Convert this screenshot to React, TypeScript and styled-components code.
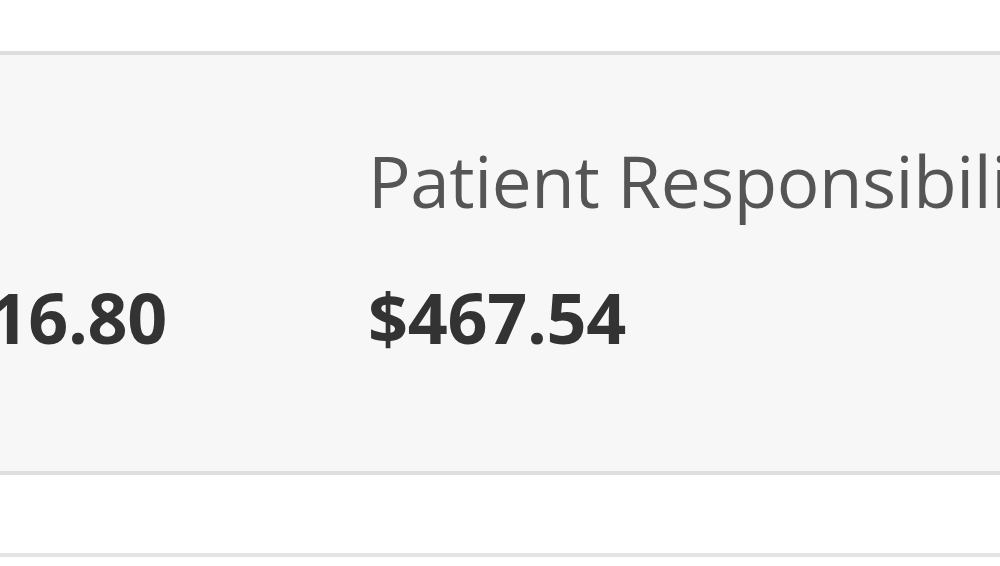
import React from "react";
import styled, { createGlobalStyle } from "styled-components";

const GlobalStyle = createGlobalStyle`
  html, body {
    margin: 0;
    padding: 0;
    background: #ffffff;
    overflow: hidden;
  }
  body {
    font-family: "Open Sans", "Noto Sans", sans-serif;
  }
`;

const Page = styled.div`
  width: 1000px;
  height: 566px;
  overflow: hidden;
  padding-top: 51px;
  box-sizing: border-box;
`;

const Summary = styled.section`
  background: #f7f7f7;
  border-top: 4px solid #dedede;
  border-bottom: 4px solid #dedede;
  height: 424px;
  box-sizing: border-box;
  overflow: hidden;
`;

const Row = styled.div`
  display: flex;
  margin-left: -91px;
  padding-top: 90px;
`;

const Column = styled.div`
  flex: 0 0 459px;
  display: flex;
  flex-direction: column;
  white-space: nowrap;
`;

const Label = styled.div`
  font-size: 71px;
  line-height: 1;
  color: #555555;
  letter-spacing: -0.4px;
`;

const Value = styled.div`
  margin-top: 66px;
  font-size: 70px;
  line-height: 1;
  font-weight: 700;
  color: #333333;
  letter-spacing: -0.3px;
`;

const Spacer = styled.div`
  height: 78px;
  border-bottom: 4px solid #e4e4e4;
`;

const items = [
  { label: "", value: "$216.80" },
  { label: "Patient Responsibility", value: "$467.54" },
];

export default function App() {
  return (
    <Page>
      <GlobalStyle />
      <Summary>
        <Row>
          {items.map((it, i) => (
            <Column key={i}>
              <Label>{it.label || "\u00a0"}</Label>
              <Value>{it.value}</Value>
            </Column>
          ))}
        </Row>
      </Summary>
      <Spacer />
    </Page>
  );
}
